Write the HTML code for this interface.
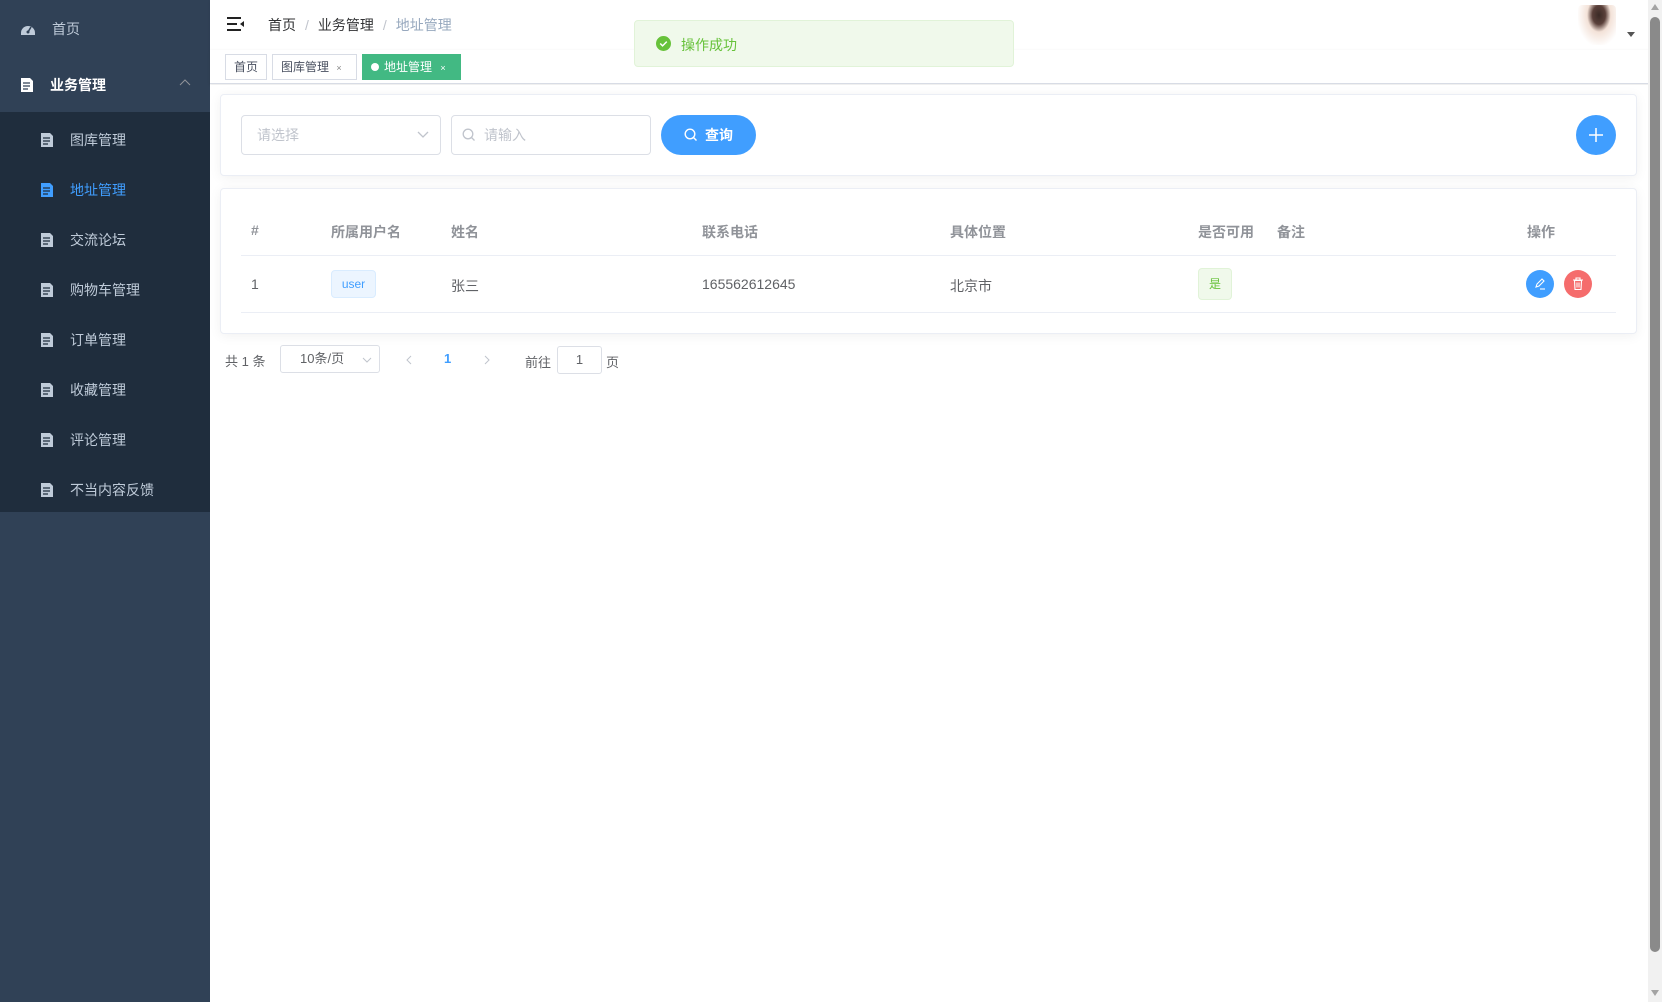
<!DOCTYPE html>
<html><head><meta charset="utf-8"><style>
*{box-sizing:border-box;margin:0;padding:0}
body{width:1662px;height:1002px;overflow:hidden;font-family:"Liberation Sans","Noto Sans CJK SC",sans-serif;font-size:14px;color:#606266;background:#fff;position:relative}
.abs{position:absolute}
.side{left:0;top:0;width:210px;height:1002px;background:#304156}
.sub{left:0;top:112px;width:210px;height:400px;background:#1f2d3d}
.mi{position:absolute;color:#bfcbd9;font-size:14px;display:flex;align-items:center}
.mi svg{margin-right:16px}
.th{position:absolute;top:222px;font-weight:bold;color:#909399;font-size:14px}
.td{position:absolute;top:276px;color:#606266;font-size:14px}
</style></head><body>
<div class="abs side"></div>
<div class="abs sub"></div>
<div class="mi" style="left:20px;top:19px"><svg width="16" height="16" viewBox="0 0 16 16"><path d="M1 12a7 7 0 0 1 14 0v2H1z" fill="#bfcbd9"/><circle cx="8" cy="11" r="1.5" fill="#304156"/><path d="M8 11L11 6" stroke="#304156" stroke-width="1.5"/></svg><span>首页</span></div>
<div class="mi" style="left:20px;top:75px;color:#fff;font-weight:bold"><svg width="14" height="16" viewBox="0 0 14 16"><path d="M1 1h9l3 3v11H1z" fill="#fff"/><path d="M3 6h7M3 9h7M3 12h5" stroke="#304156" stroke-width="1.3"/></svg><span>业务管理</span></div>
<svg class="abs" style="left:179px;top:79px" width="12" height="8" viewBox="0 0 12 8"><path d="M1 6l5-5 5 5" stroke="#909399" fill="none"/></svg>
<div class="mi" style="left:40px;top:130px"><svg width="14" height="16" viewBox="0 0 14 16"><path d="M1 1h9l3 3v11H1z" fill="#bfcbd9"/><path d="M3 6h7M3 9h7M3 12h5" stroke="#1f2d3d" stroke-width="1.3"/></svg><span>图库管理</span></div>
<div class="mi" style="left:40px;top:180px;color:#409eff"><svg width="14" height="16" viewBox="0 0 14 16"><path d="M1 1h9l3 3v11H1z" fill="#409eff"/><path d="M3 6h7M3 9h7M3 12h5" stroke="#1f2d3d" stroke-width="1.3"/></svg><span>地址管理</span></div>
<div class="mi" style="left:40px;top:230px"><svg width="14" height="16" viewBox="0 0 14 16"><path d="M1 1h9l3 3v11H1z" fill="#bfcbd9"/><path d="M3 6h7M3 9h7M3 12h5" stroke="#1f2d3d" stroke-width="1.3"/></svg><span>交流论坛</span></div>
<div class="mi" style="left:40px;top:280px"><svg width="14" height="16" viewBox="0 0 14 16"><path d="M1 1h9l3 3v11H1z" fill="#bfcbd9"/><path d="M3 6h7M3 9h7M3 12h5" stroke="#1f2d3d" stroke-width="1.3"/></svg><span>购物车管理</span></div>
<div class="mi" style="left:40px;top:330px"><svg width="14" height="16" viewBox="0 0 14 16"><path d="M1 1h9l3 3v11H1z" fill="#bfcbd9"/><path d="M3 6h7M3 9h7M3 12h5" stroke="#1f2d3d" stroke-width="1.3"/></svg><span>订单管理</span></div>
<div class="mi" style="left:40px;top:380px"><svg width="14" height="16" viewBox="0 0 14 16"><path d="M1 1h9l3 3v11H1z" fill="#bfcbd9"/><path d="M3 6h7M3 9h7M3 12h5" stroke="#1f2d3d" stroke-width="1.3"/></svg><span>收藏管理</span></div>
<div class="mi" style="left:40px;top:430px"><svg width="14" height="16" viewBox="0 0 14 16"><path d="M1 1h9l3 3v11H1z" fill="#bfcbd9"/><path d="M3 6h7M3 9h7M3 12h5" stroke="#1f2d3d" stroke-width="1.3"/></svg><span>评论管理</span></div>
<div class="mi" style="left:40px;top:480px"><svg width="14" height="16" viewBox="0 0 14 16"><path d="M1 1h9l3 3v11H1z" fill="#bfcbd9"/><path d="M3 6h7M3 9h7M3 12h5" stroke="#1f2d3d" stroke-width="1.3"/></svg><span>不当内容反馈</span></div>

<div class="abs" style="left:210px;top:0;width:1440px;height:50px;background:#fff;box-shadow:0 1px 3px rgba(0,21,41,.08)"></div>
<svg class="abs" style="left:227px;top:17px" width="17" height="14" viewBox="0 0 17 14"><path d="M0 1h14M0 7h10M0 13h14" stroke="#222" stroke-width="2"/><path d="M17 4v6l-4-3z" fill="#222"/></svg>
<div class="abs" style="left:268px;top:15px;font-size:14px;color:#303133">首页<span style="color:#c0c4cc;margin:0 9px">/</span>业务管理<span style="color:#c0c4cc;margin:0 9px">/</span><span style="color:#97a8be">地址管理</span></div>
<div class="abs" style="left:1578px;top:5px;width:38px;height:40px;border-radius:4px;background:radial-gradient(ellipse at 55% 25%,#3a2a25 0%,#5a403a 22%,#f3e2d8 40%,#fff 75%)"></div>
<svg class="abs" style="left:1627px;top:32px" width="8" height="6"><path d="M0 0h8L4 5z" fill="#555"/></svg>

<div class="abs" style="left:210px;top:50px;width:1440px;height:34px;background:#fff;border-bottom:1px solid #d8dce5;box-shadow:0 1px 3px rgba(0,0,0,.1)"></div>
<div class="abs" style="left:225px;top:54px;width:42px;height:26px;border:1px solid #d8dce5;font-size:12px;color:#495060;line-height:24px;text-align:center">首页</div>
<div class="abs" style="left:272px;top:54px;width:85px;height:26px;border:1px solid #d8dce5;font-size:12px;color:#495060;line-height:24px;padding-left:8px">图库管理 <span style="font-size:9px;color:#888;margin-left:4px">×</span></div>
<div class="abs" style="left:362px;top:54px;width:99px;height:26px;background:#42b983;font-size:12px;color:#fff;line-height:26px;padding-left:9px"><span style="display:inline-block;width:8px;height:8px;border-radius:50%;background:#fff;margin-right:5px"></span>地址管理 <span style="font-size:9px;margin-left:5px">×</span></div>

<div class="abs" style="left:634px;top:20px;width:380px;height:47px;background:#f0f9eb;border:1px solid #e1f3d8;border-radius:4px"></div>
<svg class="abs" style="left:656px;top:36px" width="15" height="15" viewBox="0 0 16 16"><circle cx="8" cy="8" r="8" fill="#67c23a"/><path d="M4.5 8l2.5 2.5 4.5-4.5" stroke="#fff" stroke-width="1.6" fill="none"/></svg>
<div class="abs" style="left:681px;top:35px;font-size:14px;color:#67c23a">操作成功</div>

<div class="abs" style="left:210px;top:85px;width:1440px;height:917px;background:#fff"></div>
<div class="abs" style="left:220px;top:94px;width:1417px;height:82px;background:#fff;border:1px solid #ebeef5;border-radius:4px;box-shadow:0 2px 12px rgba(0,0,0,.06)"></div>
<div class="abs" style="left:241px;top:115px;width:200px;height:40px;border:1px solid #dcdfe6;border-radius:4px;color:#c0c4cc;line-height:38px;padding-left:15px">请选择</div>
<svg class="abs" style="left:417px;top:131px" width="12" height="8"><path d="M1 1l5 5 5-5" stroke="#c0c4cc" fill="none" stroke-width="1.3"/></svg>
<div class="abs" style="left:451px;top:115px;width:200px;height:40px;border:1px solid #dcdfe6;border-radius:4px;color:#c0c4cc;line-height:38px;padding-left:32px">请输入</div>
<svg class="abs" style="left:462px;top:128px" width="14" height="14" viewBox="0 0 14 14"><circle cx="6" cy="6" r="4.8" stroke="#c0c4cc" fill="none" stroke-width="1.3"/><path d="M9.5 9.5l3 3" stroke="#c0c4cc" stroke-width="1.3"/></svg>
<div class="abs" style="left:661px;top:115px;width:95px;height:40px;border-radius:20px;background:#409eff;color:#fff;font-weight:bold;line-height:40px;padding-left:44px">查询</div>
<svg class="abs" style="left:684px;top:128px" width="14" height="14" viewBox="0 0 14 14"><circle cx="6" cy="6" r="4.8" stroke="#fff" fill="none" stroke-width="1.4"/><path d="M9.5 9.5l3 3" stroke="#fff" stroke-width="1.4"/></svg>
<div class="abs" style="left:1576px;top:115px;width:40px;height:40px;border-radius:50%;background:#409eff"></div>
<svg class="abs" style="left:1589px;top:128px" width="14" height="14"><path d="M7 0v14M0 7h14" stroke="#fff" stroke-width="1.5"/></svg>

<div class="abs" style="left:220px;top:188px;width:1417px;height:146px;background:#fff;border:1px solid #ebeef5;border-radius:4px;box-shadow:0 2px 12px rgba(0,0,0,.06)"></div>
<div class="abs" style="left:241px;top:255px;width:1375px;height:1px;background:#ebeef5"></div>
<div class="abs" style="left:241px;top:312px;width:1375px;height:1px;background:#ebeef5"></div>
<div class="th" style="left:251px">#</div>
<div class="th" style="left:331px">所属用户名</div>
<div class="th" style="left:451px">姓名</div>
<div class="th" style="left:702px">联系电话</div>
<div class="th" style="left:950px">具体位置</div>
<div class="th" style="left:1198px">是否可用</div>
<div class="th" style="left:1277px">备注</div>
<div class="th" style="left:1527px">操作</div>
<div class="td" style="left:251px">1</div>
<div class="abs" style="left:331px;top:270px;width:45px;height:28px;background:#ecf5ff;border:1px solid #d9ecff;border-radius:4px;color:#409eff;font-size:12px;line-height:26px;text-align:center">user</div>
<div class="td" style="left:451px">张三</div>
<div class="td" style="left:702px">165562612645</div>
<div class="td" style="left:950px">北京市</div>
<div class="abs" style="left:1198px;top:268px;width:34px;height:32px;background:#f0f9eb;border:1px solid #e1f3d8;border-radius:4px;color:#67c23a;font-size:12px;line-height:30px;text-align:center">是</div>
<div class="abs" style="left:1526px;top:270px;width:28px;height:28px;border-radius:50%;background:#409eff"></div>
<svg class="abs" style="left:1533px;top:277px" width="14" height="14" viewBox="0 0 14 14"><path d="M3 10l1-3 5-5 2 2-5 5z" stroke="#fff" fill="none" stroke-width="1.1"/><path d="M7 12h5" stroke="#fff" stroke-width="1.1"/></svg>
<div class="abs" style="left:1564px;top:270px;width:28px;height:28px;border-radius:50%;background:#f56c6c"></div>
<svg class="abs" style="left:1572px;top:277px" width="12" height="14" viewBox="0 0 12 14"><path d="M1 3h10M4 3V1h4v2M2.5 3.5l.5 9h6l.5-9z" stroke="#fff" fill="none" stroke-width="1.1"/><path d="M5 5.5v5M7 5.5v5" stroke="#fff"/></svg>

<div class="abs" style="left:225px;top:351px;font-size:13px;color:#606266">共 1 条</div>
<div class="abs" style="left:280px;top:345px;width:100px;height:28px;border:1px solid #dcdfe6;border-radius:3px;font-size:13px;line-height:26px;padding-left:19px">10条/页</div>
<svg class="abs" style="left:362px;top:357px" width="10" height="6"><path d="M1 1l4 4 4-4" stroke="#c0c4cc" fill="none"/></svg>
<svg class="abs" style="left:406px;top:355px" width="6" height="10"><path d="M5 1L1 5l4 4" stroke="#c0c4cc" fill="none"/></svg>
<div class="abs" style="left:444px;top:351px;font-size:13px;color:#409eff;font-weight:bold">1</div>
<svg class="abs" style="left:484px;top:355px" width="6" height="10"><path d="M1 1l4 4-4 4" stroke="#c0c4cc" fill="none"/></svg>
<div class="abs" style="left:525px;top:352px;font-size:13px">前往</div>
<div class="abs" style="left:557px;top:346px;width:45px;height:28px;border:1px solid #dcdfe6;border-radius:3px;text-align:center;line-height:26px;font-size:13px">1</div>
<div class="abs" style="left:606px;top:352px;font-size:13px">页</div>

<div class="abs" style="left:1648px;top:0;width:14px;height:1002px;background:#f1f1f1"></div>
<div class="abs" style="left:1650px;top:17px;width:10px;height:935px;background:#8a8a8a;border-radius:5px"></div>
<svg class="abs" style="left:1651px;top:3px" width="8" height="8"><path d="M0 7h8L4 1z" fill="#a3a3a3"/></svg>
<svg class="abs" style="left:1651px;top:989px" width="8" height="8"><path d="M0 1h8L4 7z" fill="#a3a3a3"/></svg>
</body></html>
